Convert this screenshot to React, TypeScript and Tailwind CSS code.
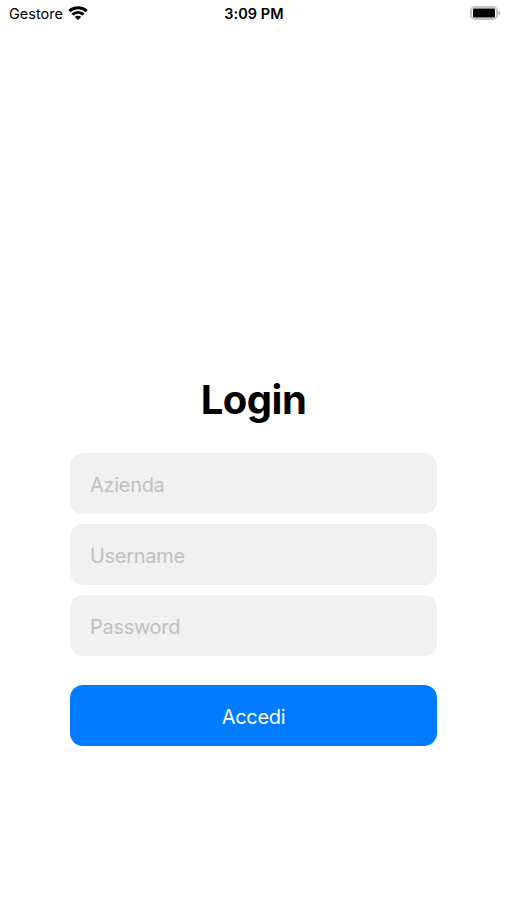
import React from "react";

function Wifi() {
  return (
    <svg className="-mt-[2px] ml-[5px] h-[14px] w-[20px]" viewBox="0 0 20 14" fill="none" stroke="#000">
      <path d="M1.4 5.1C6 .7 14 .7 18.6 5.1" strokeWidth="3" />
      <path d="M4.4 8.5C7.5 5.6 12.5 5.6 15.6 8.5" strokeWidth="2.8" />
      <path d="M10 13.9 6.8 10.9C8.5 9.4 11.5 9.4 13.2 10.9Z" fill="#000" stroke="none" />
    </svg>
  );
}

function Battery() {
  return (
    <svg className="-mt-[2px] h-[14px] w-[31px]" viewBox="0 0 31 14">
      <rect x="1" y="1" width="26" height="12" rx="3.7" fill="none" stroke="#c4c4c4" strokeWidth="2" />
      <rect x="3" y="2.5" width="22" height="9" rx="1" fill="#000" />
      <path d="M28.5 4.7C31 5.6 31 8.4 28.5 9.3Z" fill="#b0b0b0" />
    </svg>
  );
}

function Field({ label, type = "text" }: { label: string; type?: string }) {
  return (
    <input
      type={type}
      placeholder={label}
      className="h-[61px] w-full rounded-[13px] bg-[#f1f1f1] px-5 pt-[2px] text-[20px] tracking-[-0.3px] outline-none placeholder:text-[#bfbfbf]"
    />
  );
}

export default function App() {
  return (
    <main className="flex h-[900px] w-[507px] flex-col bg-white font-['Inter',sans-serif] text-black">
      <header className="grid h-7 grid-cols-[1fr_auto_1fr] items-center pr-[6px] pl-[7px] text-[14.5px]">
        <div className="flex items-center pl-[2px]">
          <span>Gestore</span>
          <Wifi />
        </div>
        <span className="text-center font-semibold tracking-[0.05px]">3:09 PM</span>
        <div className="flex justify-end"><Battery /></div>
      </header>
      <form className="mx-auto mt-[346px] flex w-[367px] flex-col" onSubmit={(e) => e.preventDefault()}>
        <h1 className="h-[50px] text-center text-[40px] leading-[51px] font-bold tracking-[-0.5px]">Login</h1>
        <div className="mt-[29.4px] flex flex-col gap-[10px]">
          <Field label="Azienda" />
          <Field label="Username" />
          <Field label="Password" type="password" />
        </div>
        <button className="mt-[29px] h-[61px] rounded-[13px] bg-[#007aff] pt-[3px] text-[20px] tracking-[-0.3px] text-white">Accedi</button>
      </form>
    </main>
  );
}
